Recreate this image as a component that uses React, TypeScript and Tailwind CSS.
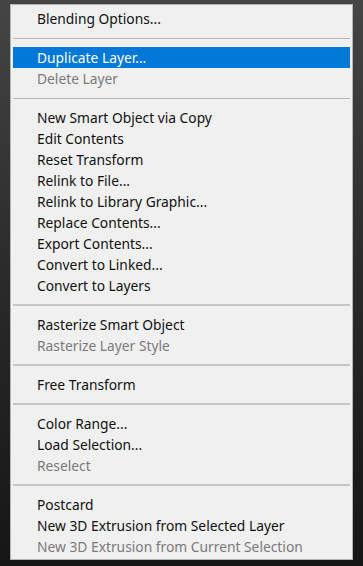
import * as React from "react"

type Entry =
  | { kind: "item"; label: string; disabled?: boolean; active?: boolean }
  | { kind: "sep"; thin?: boolean }

const entries: Entry[] = [
  { kind: "item", label: "Blending Options..." },
  { kind: "sep", thin: true },
  { kind: "item", label: "Duplicate Layer...", active: true },
  { kind: "item", label: "Delete Layer", disabled: true },
  { kind: "sep", thin: true },
  { kind: "item", label: "New Smart Object via Copy" },
  { kind: "item", label: "Edit Contents" },
  { kind: "item", label: "Reset Transform" },
  { kind: "item", label: "Relink to File..." },
  { kind: "item", label: "Relink to Library Graphic..." },
  { kind: "item", label: "Replace Contents..." },
  { kind: "item", label: "Export Contents..." },
  { kind: "item", label: "Convert to Linked..." },
  { kind: "item", label: "Convert to Layers" },
  { kind: "sep" },
  { kind: "item", label: "Rasterize Smart Object" },
  { kind: "item", label: "Rasterize Layer Style", disabled: true },
  { kind: "sep" },
  { kind: "item", label: "Free Transform" },
  { kind: "sep" },
  { kind: "item", label: "Color Range..." },
  { kind: "item", label: "Load Selection..." },
  { kind: "item", label: "Reselect", disabled: true },
  { kind: "sep" },
  { kind: "item", label: "Postcard" },
  { kind: "item", label: "New 3D Extrusion from Selected Layer" },
  { kind: "item", label: "New 3D Extrusion from Current Selection", disabled: true },
]

function MenuRow({ label, disabled, active }: { label: string; disabled?: boolean; active?: boolean }) {
  return (
    <div
      className={
        "h-[21px] flex items-center pl-[24px] mx-[2px] " +
        (active ? "bg-[#0078d7] text-white" : disabled ? "text-[#7a7a7a]" : "text-[#111]")
      }
    >
      <span className="leading-none">{label}</span>
    </div>
  )
}

export default function App() {
  return (
    <div className="w-[363px] h-[566px] overflow-hidden bg-gradient-to-b from-[#454545] via-[#2a2a2a] to-[#161616] pt-[4px] pl-[10px]">
      <div
        className="w-[343px] bg-[#f0f0f0] border border-[#b4b4b4] pt-[3px] pb-[2px] text-[13.8px]"
        style={{ fontFamily: '"Noto Sans", "Open Sans", sans-serif' }}
      >
        {entries.map((e, i) =>
          e.kind === "sep" ? (
            <div key={i} className="h-[18px] flex items-center mx-[2px]">
              <div className={e.thin ? "w-full h-px bg-[#b8b8b8]" : "w-full h-[2px] bg-[#c6c6c6]"} />
            </div>
          ) : (
            <MenuRow key={i} label={e.label} disabled={e.disabled} active={e.active} />
          )
        )}
      </div>
    </div>
  )
}
